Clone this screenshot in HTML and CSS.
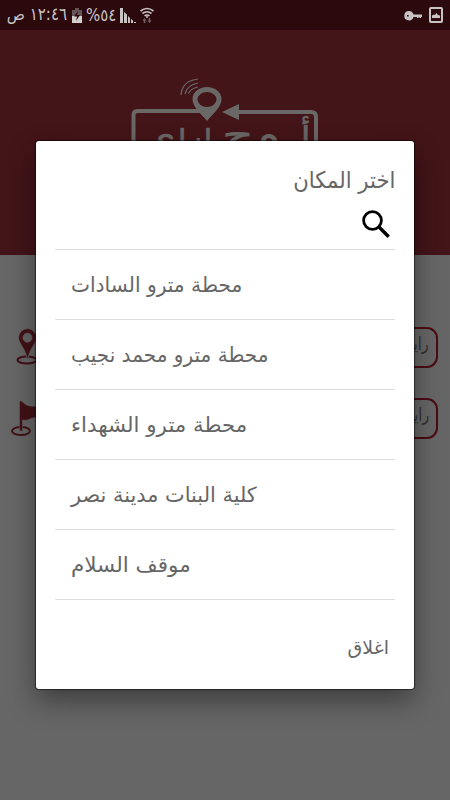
FILE: index.html
```html
<!DOCTYPE html>
<html lang="ar">
<head>
<meta charset="utf-8">
<title>اختر المكان</title>
<link rel="stylesheet" href="styles.css">
</head>
<body>
<div class="screen">
  <header class="status">
    <span class="time" dir="rtl"><bdi>١٢:٤٦</bdi> ص</span>
    <svg class="battery" width="10" height="15" viewBox="0 0 10 15"><path d="M3 0h4v2h3v13H0V2h3z" fill="#645456"/><path d="M0 8h10v7H0z" fill="#d4cfcf"/><path d="M6 3L2 8.500h3L4 13l4-6H5z" fill="#2b090d"/></svg>
    <span class="percent" dir="ltr">%٥٤</span>
    <svg class="signal" width="16" height="16" viewBox="0 0 16 16"><path d="M0 1h3v15H0zM4 5l3 2.500V16H4zM8 9l2 2v5H8zM11 12l2 1.500V16h-2zM14 15h2v1h-2z" fill="#c9c3c4"/></svg>
    <svg class="wifi" width="14" height="17" viewBox="0 0 14 17"><g fill="none" stroke="#c9c3c4" stroke-width="1.600"><path d="M.5 4Q7-1 13.500 4M2.500 6.500Q7 3 11.500 6.500M4.500 9Q7 7 9.500 9"/></g><circle cx="7" cy="10" r="1" fill="#c9c3c4"/><path d="M4.500 11l2 2.500H5.300V16H3.700v-2.500h-1.200zM9.500 16l-2-2.500h1.200V11h1.600v2.500h1.200z" fill="#715f62"/></svg>
    <span class="spacer"></span>
    <svg class="key" width="18" height="10" viewBox="0 0 18 10"><path fill="#c9c3c4" fill-rule="evenodd" d="M5 0a4.700 4.700 0 0 1 4.500 3.500h8.500v2.500H17v1h-1.500v-1h-1v1H13v-1H9.500A4.700 4.700 0 1 1 5 0zM3 4v1.600h1.600V4z"/></svg>
    <svg class="image" width="14" height="16" viewBox="0 0 14 16"><rect x="1" y="1" width="12" height="14" rx="1" fill="none" stroke="#c9c3c4" stroke-width="2"/><path d="M3 11V8.500l2-1 1 .5 1.500-2 1.500 2 2 .5V11z" fill="#c9c3c4"/></svg>
  </header>
  <div class="banner">
    <svg width="200" height="100" viewBox="125 70 200 100">
      <g fill="none" stroke="#6a6767">
        <path stroke-width="4" d="M133.500 165V115q0-4 4-4H200M238 112h73q5 0 5 5V165"/>
        <g stroke-width="1.200"><path d="M181 95q1-14 17-16M185 94q2-9 13-11M188.500 93.500q2-5 9.500-6.500"/></g>
      </g>
      <path fill="#6a6767" fill-rule="evenodd" d="M207 87c8 0 14.500 5 14.500 12 0 8-7 13-14.500 22-7.500-9-14.500-14-14.500-22 0-7 6.500-12 14.500-12zm0 5a9.500 7.500 0 1 0 0 15 9.500 7.500 0 0 0 0-15zM222 112l17-8v16z"/>
      <g class="logo-text" text-anchor="middle">
        <text class="logo-tall" x="297" y="152" textLength="27" lengthAdjust="spacingAndGlyphs">أر</text>
        <text class="logo-wide" x="269" y="147" textLength="24" lengthAdjust="spacingAndGlyphs">و</text>
        <text class="logo-wide" x="238" y="150" textLength="33" lengthAdjust="spacingAndGlyphs">ح</text>
        <text class="logo-tall" x="195" y="155" textLength="35" lengthAdjust="spacingAndGlyphs">ازا</text>
        <text class="logo-wide" x="160" y="151" textLength="32" lengthAdjust="spacingAndGlyphs">ي</text>
      </g>
    </svg>
  </div>
  <main class="fields">
    <div class="row"><svg class="pin" width="30" height="38" viewBox="0 0 30 38"><ellipse cx="15" cy="31" rx="9.500" ry="3.600" fill="none" stroke="#421117" stroke-width="2"/><path fill="#421117" stroke="#666" stroke-width=".8" fill-rule="evenodd" d="M15.500-.4a9 9 0 0 1 9 9C24.500 15 18 18 15.500 31 13 18 6.500 15 6.500 8.600a9 9 0 0 1 9-9zm0 4.600a4.500 4.500 0 1 0 0 9 4.500 4.500 0 0 0 0-9z"/></svg><div class="field" dir="rtl"><span>رايح فين</span></div></div>
    <div class="row"><svg class="flag" width="34" height="38" viewBox="0 0 34 38"><ellipse cx="11" cy="31" rx="9" ry="4" fill="none" stroke="#421117" stroke-width="2"/><path fill="#421117" stroke="#666" stroke-width=".5" d="M9.500 1h2c5 5 9 6 17 5v13c-7-4-9 3-16 1v11h-3z"/></svg><div class="field" dir="rtl"><span>رايح منين</span></div></div>
  </main>
  <section class="dialog" role="dialog">
    <h1 dir="rtl"><span class="t0">اختر المكان</span></h1>
    <div class="search"><svg width="28" height="29" viewBox="0 0 28 29"><circle cx="10.500" cy="10.500" r="8.900" fill="none" stroke="#000" stroke-width="2.800"/><path d="M17 17l9.700 9.700" stroke="#000" stroke-width="3.400"/></svg></div>
    <ul>
      <li><span class="t1">محطة مترو السادات</span></li>
      <li><span class="t2">محطة مترو محمد نجيب</span></li>
      <li><span class="t3">محطة مترو الشهداء</span></li>
      <li><span class="t4">كلية البنات مدينة نصر</span></li>
      <li><span class="t5">موقف السلام</span></li>
    </ul>
    <footer dir="rtl"><span class="close">اغلاق</span></footer>
  </section>
</div>
</body>
</html>
```
FILE: styles.css
```css
* { box-sizing: border-box; margin: 0; padding: 0; }
body { width: 450px; height: 800px; overflow: hidden; font-family: "DejaVu Sans", sans-serif; }
svg { display: block; flex: none; }
.screen { position: relative; height: 800px; background: #666; }
.status { height: 30px; background: #2b090d; display: flex; align-items: flex-start; padding: 0 7px; color: #c9c3c4; font-size: 15px; line-height: 30px; white-space: nowrap; }
.time { width: 60px; transform: scaleY(1.15); transform-origin: 0 60%; }
.battery { margin: 8px 0 0 5px; }
.percent { width: 30px; margin-left: 4px; transform: scaleY(1.12); }
.signal { margin: 7px 0 0 4px; }
.wifi { margin: 7px 0 0 4px; }
.spacer { flex: 1; }
.key { margin: 11px 0 0; }
.image { margin: 7px 0 0 7px; }
.banner { height: 225px; background: #431418; padding: 40px 0 0 125px; }
.logo-text { fill: #6a6767; stroke: #6a6767; }
.logo-tall { font-size: 36px; stroke-width: .6px; }
.logo-wide { font-size: 42px; stroke-width: 0; }
.fields { padding-top: 72px; }
.row { display: flex; height: 41px; margin-bottom: 30px; }
.pin { margin: 2px 0 0 12px; overflow: visible; }
.flag { margin: 2px 0 0 10px; }
.field { flex: 1; margin: 0 12px 0 20px; border: 2px solid #4b0b12; border-radius: 11px; padding-right: 7px; font-size: 18px; line-height: 30px; color: #323232; }
.field span { display: inline-block; transform: scaleX(.8); transform-origin: 100% 50%; }
.dialog { position: absolute; left: 36px; top: 141px; width: 378px; height: 548px; border-radius: 3px; background: #fff; padding: 20px 19px 0; box-shadow: 0 0 1px 1px rgba(0,0,0,.5), 0 12px 28px rgba(0,0,0,.4); color: #666; }
h1 { height: 49px; font-size: 20px; font-weight: 400; line-height: 40px; }
h1 span, li span, footer span { display: inline-block; white-space: nowrap; transform-origin: 0 60%; }
.search { height: 40px; border-bottom: 1px solid #ddd; display: flex; justify-content: flex-end; padding-right: 5px; }
ul { list-style: none; }
li { height: 70px; border-bottom: 1px solid #ddd; padding-left: 16px; font-size: 19px; line-height: 71px; }
.t0 { transform: scale(1.06, 1.15); transform-origin: 100% 60%; }
.t1 { transform: scale(1.062, 1.1); }
.t2 { transform: scale(1.055, 1.1); }
.t3 { transform: scale(1.124, 1.1); }
.t4 { transform: scale(1.098, 1.1); }
.t5 { transform: scale(1.13, 1.1); }
footer { padding: 28px 6px 0; font-size: 17px; line-height: 40px; }
footer .close { transform: scale(1.12, 1.1); transform-origin: 100% 60%; }
```
